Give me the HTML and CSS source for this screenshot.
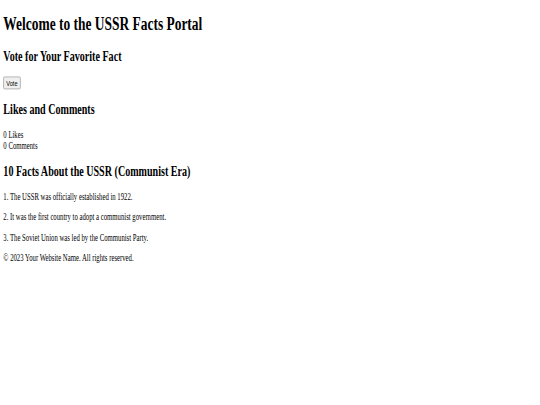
FILE: index.html
```html
<!DOCTYPE html>
<html lang="en">
<head>
<meta charset="utf-8">
<title>USSR Facts Portal</title>
<link rel="stylesheet" href="styles.css">
</head>
<body>
<div class="page">
  <header>
    <h1>Welcome to the USSR Facts Portal</h1>
  </header>
  <section class="vote">
    <h2>Vote for Your Favorite Fact</h2>
    <div class="vote-actions"><button class="vote-btn" type="button">Vote</button></div>
  </section>
  <section class="social">
    <h2>Likes and Comments</h2>
    <div class="counts">
      <div>0 Likes</div>
      <div>0 Comments</div>
    </div>
  </section>
  <section class="facts">
    <h2>10 Facts About the USSR (Communist Era)</h2>
    <p>1. The USSR was officially established in 1922.</p>
    <p>2. It was the first country to adopt a communist government.</p>
    <p>3. The Soviet Union was led by the Communist Party.</p>
  </section>
  <footer>
    <p>&copy; 2023 Your Website Name. All rights reserved.</p>
  </footer>
</div>
</body>
</html>
```
FILE: styles.css
```css
html, body {
  margin: 0;
  padding: 0;
  background: #ffffff;
}
body {
  overflow: hidden;
}
.page {
  display: flow-root;
  padding: 0 8px;
  box-sizing: border-box;
  font-family: "Liberation Serif", "Times New Roman", serif;
  font-size: 16px;
  color: #000;
  transform: scale(0.42, 0.603);
  transform-origin: 0 0;
  white-space: nowrap;
}
h1 {
  font-size: 32px;
  margin: 21.44px 0;
}
h2 {
  font-size: 24px;
  margin: 19.92px 0;
}
p {
  margin: 16px 0;
}
.vote-actions {
  display: flex;
}
.vote-btn {
  font-family: Arial, "Liberation Sans", sans-serif;
  font-size: 13.333px;
  height: 21px;
  padding: 1px 6px;
  border: 1px solid #767676;
  border-radius: 3px;
  background: #efefef;
  color: #000;
  line-height: 17px;
}
```
